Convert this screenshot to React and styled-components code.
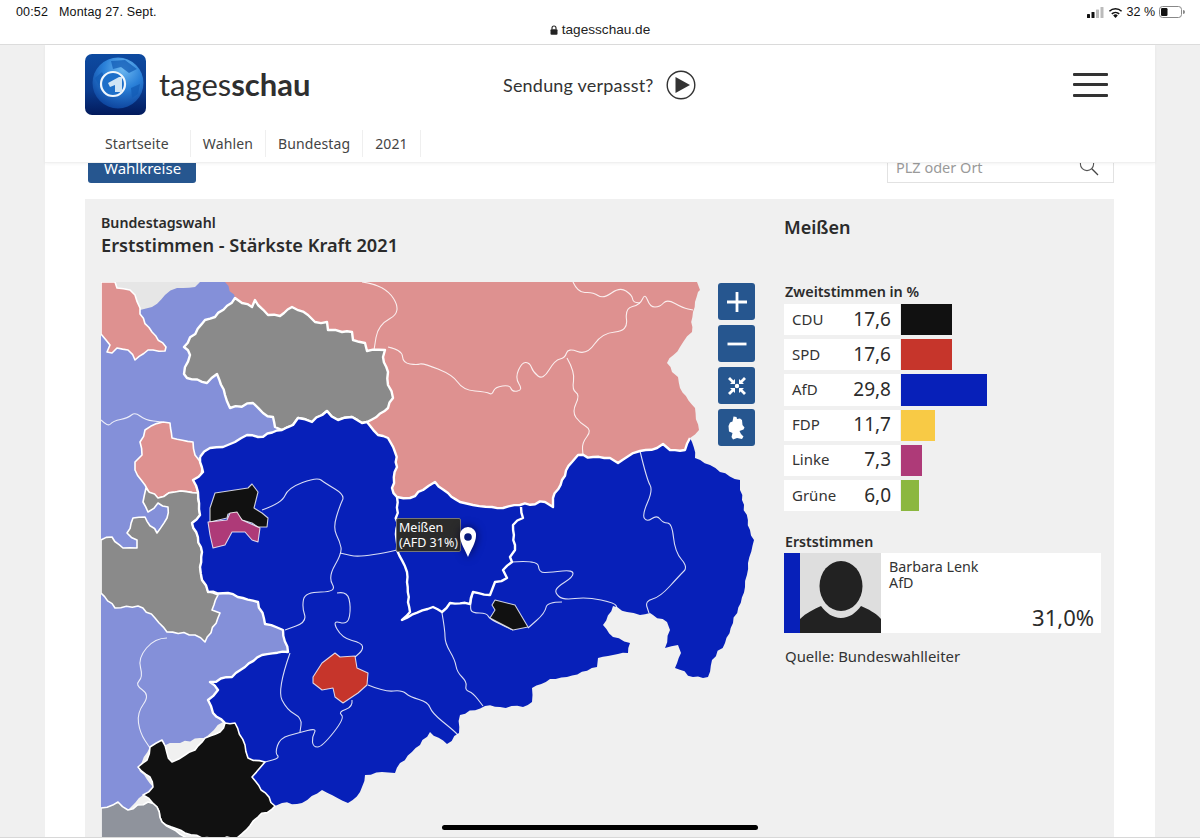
import React from "react";
import styled, { createGlobalStyle } from "styled-components";

const GlobalStyle = createGlobalStyle`
  html, body {
    margin: 0;
    padding: 0;
    background: #f0f0f0;
    overflow: hidden;
  }
  * { box-sizing: border-box; }
`;

//Data
const navItems = ["Startseite", "Wahlen", "Bundestag", "2021"];

const results = [
  { party: "CDU", value: "17,6", width: 51, color: "#111111" },
  { party: "SPD", value: "17,6", width: 51, color: "#c6352b" },
  { party: "AfD", value: "29,8", width: 86, color: "#0720b9" },
  { party: "FDP", value: "11,7", width: 34, color: "#f8ca45" },
  { party: "Linke", value: "7,3", width: 21, color: "#ae3a78" },
  { party: "Grüne", value: "6,0", width: 18, color: "#8bb73f" },
];

//Map shapes, in screen coordinates
const BLUE = "#0720b9";
const PINK = "#de9190";
const GRAY = "#8a8a8a";
const LIGHT = "#8490d9";
const BLACK = "#111111";

const regions = [
  {
    fill: LIGHT,
    width: 0,
    points:
      "101,282 228,282 240,300 300,420 288,652 262,655 232,677 210,682 218,690 208,700 213,713 223,722 205,738 150,747 138,767 153,787 143,795 128,810 118,802 101,808",
  },
  {
    fill: "#e6e6e6",
    width: 0,
    points: "115,282 200,282 195,287 177,288 165,295 152,307 140,310 135,295 130,290 117,288",
  },
  {
    fill: PINK,
    width: 1.6,
    points:
      "101,282 115,282 117,288 130,290 135,295 140,308 140,314 152,332 166,347 165,351 153,350 148,350 135,360 128,350 117,348 112,353 107,352 110,345 101,334",
  },
  {
    fill: PINK,
    width: 0,
    points:
      "225,282 697,282 700,290 698,292 693,312 692,332 680,347 667,363 672,372 678,377 680,388 695,408 699,430 690,438 685,450 670,450 663,444 657,448 640,451 627,457 618,463 610,458 593,457 578,455 572,462 562,480 553,498 553,507 545,502 520,505 503,508 492,507 473,505 460,502 448,493 435,482 423,490 410,498 397,497 392,488 397,467 395,452 388,438 378,435 367,422 360,418 300,400",
  },
  {
    fill: GRAY,
    width: 2.4,
    points:
      "235,298 242,303 252,307 255,300 258,305 268,315 280,316 292,307 308,315 315,322 327,322 328,330 342,332 352,332 353,340 365,343 367,351 385,350 383,357 388,372 388,385 393,398 388,408 367,422 362,423 352,417 338,420 327,411 312,422 298,418 293,425 282,430 275,427 273,417 263,413 253,403 230,408 225,395 217,374 207,383 187,378 184,374 190,355 184,347 205,320 215,317",
  },
  {
    fill: PINK,
    width: 1.6,
    points:
      "163,422 170,423 172,438 193,442 195,455 202,467 200,478 195,480 198,493 175,492 158,498 150,495 145,485 135,470 135,462 142,455 140,442 145,430",
  },
  {
    fill: GRAY,
    width: 1.6,
    points:
      "146,488 143,502 148,512 158,503 168,507 167,518 157,533 145,517 133,518 127,533 137,540 137,548 123,548 112,537 101,540 101,593 115,608 138,606 155,618 167,632 195,635 205,642 220,613 212,610 218,595 208,592 202,580 200,567 202,552 192,523 200,515 198,493 175,492 158,498",
  },
  {
    fill: BLUE,
    width: 0,
    points:
      "200,457 210,448 223,447 235,442 247,435 258,437 282,430 293,425 298,418 312,422 327,411 338,420 352,417 362,423 367,422 378,435 388,438 395,452 397,467 392,488 397,497 410,498 423,490 435,482 448,493 460,502 473,505 492,507 503,508 520,505 545,502 553,507 553,498 562,480 572,462 578,455 593,457 610,458 618,463 627,457 640,451 657,448 663,444 670,450 685,450 690,438 692,442 695,458 710,465 720,472 740,480 742,500 750,530 754,540 748,563 745,587 733,623 725,643 712,660 708,677 693,677 675,668 681,653 678,645 665,648 670,630 667,622 653,615 650,613 640,615 627,612 613,606 603,625 613,637 630,643 628,653 613,655 598,658 597,667 567,677 550,679 532,688 532,702 523,707 500,707 485,706 460,715 459,733 447,744 430,732 420,745 400,763 395,773 382,772 365,775 360,792 348,803 322,790 302,803 282,803 275,806 252,777 265,762 248,758 245,745 235,723 225,723 213,713 208,700 218,690 210,682 232,677 245,667 262,655 288,652 283,630 265,624 258,602 228,593 208,592 202,580 200,567 202,552 192,523 200,515 198,492 193,480 203,472",
  },
  {
    fill: BLACK,
    width: 1.6,
    points:
      "225,723 235,723 245,745 248,758 265,762 252,777 275,806 258,817 237,838 202,838 185,833 162,822 157,807 143,795 153,787 150,777 138,767 147,760 150,747 162,740 167,753 172,762 185,755 195,750 205,738 220,732",
  },
  {
    fill: "#8f939c",
    width: 1.6,
    points: "101,808 118,802 128,810 148,802 157,807 162,822 185,837 190,840 101,840",
  },
];

const spots = [
  {
    fill: BLACK,
    points:
      "215,493 248,488 252,484 258,492 254,508 262,513 268,518 267,527 258,527 252,523 242,520 235,513 228,514 227,518 210,522 210,508",
  },
  {
    fill: "#ae3a78",
    points:
      "208,522 227,520 230,513 237,512 242,520 260,528 258,542 252,540 245,532 232,532 225,545 213,548 210,535",
  },
  {
    fill: "#c6352b",
    points:
      "322,663 335,653 340,657 355,656 357,668 368,673 367,685 358,693 343,703 335,697 333,688 322,690 313,683 313,677",
  },
  { fill: BLACK, points: "495,600 515,605 528,627 513,630 490,618 495,610 492,605" },
];

const thinLines = [
  "101,420 108,427 113,421 128,418 135,412 145,420 162,422",
  "167,638 155,638 138,658 143,677 135,685 150,695 137,713 140,733 150,748",
  "362,282 385,285 402,312 378,325 374,350",
  "388,347 402,350 403,363 417,365 423,363 453,375 463,390 487,392 492,395 495,387 510,385 512,392 523,390 515,378 522,362 530,363 533,372 543,380 555,360 565,358 568,348 587,355 602,333 628,331 625,308 640,305 645,293 650,307 660,307 667,299 683,308 693,310",
  "573,282 578,293 593,292 603,299 620,287 632,295 633,302 640,303",
  "567,358 575,372 572,390 580,395 572,412 580,423 592,430 582,443 583,455",
  "262,510 282,503 288,488 317,477 325,483 345,495 340,505 333,528 340,542 342,553 328,577 337,592 305,592 302,607 307,622 285,630",
  "337,593 347,591 351,607 348,625 332,620 342,638 362,643 363,650 355,657",
  "397,550 362,558 340,553",
  "368,685 385,692 402,690 410,697 428,702 432,713 453,730 458,735",
  "352,700 353,707 338,712 345,718 322,747 313,747 312,737 317,728 298,733 280,738 275,753 280,758 265,762",
  "290,653 277,690 287,710 302,718 300,732",
  "512,562 538,560 539,573 552,572 573,570 573,577 557,587 555,593 563,600 587,597 615,603 617,608",
  "562,602 547,602 545,613 528,628",
  "513,630 490,620 487,613 472,613 470,607 473,593",
  "442,613 445,630 445,643 455,660 457,672 467,682 465,690 473,693 483,706",
  "640,451 647,480 653,490 642,515 647,522 657,515 663,523 672,523 675,552 688,567 680,575 660,597 645,601 649,613",
];

const thickLines = [
  "200,457 210,448 223,447 235,442 247,435 258,437 282,430 293,425 298,418 312,422 327,411 338,420 352,417 362,423 367,422 378,435 388,438 395,452 397,467 392,488 397,497 410,498 423,490 435,482 448,493 460,502 473,505 492,507 503,508 520,505 545,502 553,507 553,498 562,480 572,462 578,455 593,457 610,458 618,463 627,457 640,451 657,448 663,444 670,450 685,450 690,438",
  "225,723 213,713 208,700 218,690 210,682 232,677 245,667 262,655 288,652 283,630 265,624 258,602 228,593 208,592 202,580 200,567 202,552 192,523 200,515 198,492 193,480 203,472 200,457",
  "397,497 397,550 407,572 410,612 402,620 433,607 442,612 450,603 470,604 473,592 490,595 495,582 507,578 503,570 512,562 510,557 515,550 513,525 523,518 521,507",
];

//Map helpers
const parsePoints = (points) => points.split(" ").map((p) => p.split(",").map(Number));

const wobble = (x, y) => {
  const n = Math.sin(x * 12.9898 + y * 78.233) * 43758.5453;
  return (n - Math.floor(n) - 0.5) * 2.6;
};

//Breaks an edge into short steps so the borders look jagged. Shared edges get the same steps.
const edgeSteps = (a, b) => {
  const flip = a[0] > b[0] || (a[0] === b[0] && a[1] > b[1]);
  const [s, e] = flip ? [b, a] : [a, b];
  const onFrame = (s[0] === 101 && e[0] === 101) || (s[1] === 282 && e[1] === 282);
  const dx = e[0] - s[0];
  const dy = e[1] - s[1];
  const len = Math.hypot(dx, dy);
  const steps = Math.floor(len / 5);
  const mids = [];
  for (let k = 1; k < steps; k++) {
    const x = s[0] + (dx * k) / steps;
    const y = s[1] + (dy * k) / steps;
    const w = onFrame ? 0 : wobble(Math.round(x), Math.round(y));
    mids.push([x - (dy / len) * w, y + (dx / len) * w]);
  }
  return flip ? mids.reverse() : mids;
};

const toPointString = (list) => list.map((p) => p.map((v) => v.toFixed(1)).join(",")).join(" ");

const roughenLine = (points) => {
  const list = parsePoints(points);
  const out = [];
  list.forEach((a, i) => {
    out.push(a);
    if (list[i + 1]) out.push(...edgeSteps(a, list[i + 1]));
  });
  return toPointString(out);
};

const roughen = (points) => {
  const first = points.split(" ")[0];
  return roughenLine(`${points} ${first}`);
};

//Rounded corners for the thin district lines
const smoothPath = (points) => {
  const list = parsePoints(points);
  let d = `M${list[0][0]} ${list[0][1]}`;
  for (let i = 1; i < list.length - 1; i++) {
    const mx = (list[i][0] + list[i + 1][0]) / 2;
    const my = (list[i][1] + list[i + 1][1]) / 2;
    d += ` Q${list[i][0]} ${list[i][1]} ${mx} ${my}`;
  }
  const end = list[list.length - 1];
  return `${d} L${end[0]} ${end[1]}`;
};

//Small drawings
const Logo = () => (
  <svg width="61" height="61" viewBox="0 0 61 61">
    <defs>
      <linearGradient id="logoBg" x1="0" y1="0" x2="0" y2="1">
        <stop offset="0" stopColor="#0d4aa0" />
        <stop offset="0.6" stopColor="#0a3a8c" />
        <stop offset="1" stopColor="#021a5c" />
      </linearGradient>
      <radialGradient id="logoGlobe" cx="0.6" cy="0.22" r="0.85">
        <stop offset="0" stopColor="#6db8f0" />
        <stop offset="0.45" stopColor="#2a80d8" />
        <stop offset="1" stopColor="#0a3d96" />
      </radialGradient>
    </defs>
    <rect width="61" height="61" rx="7" fill="url(#logoBg)" />
    <circle cx="33" cy="29" r="25.5" fill="url(#logoGlobe)" />
    <path d="M26 7 L40 6 L52 15 L44 19 L36 13 L28 15 Z M10 24 L17 18 L20 24 L14 32 Z M46 34 L55 30 L53 40 L47 44 Z" fill="#135cb5" opacity="0.75" />
    <circle cx="28" cy="30" r="12" fill="#1d6fc9" stroke="#f0f7fd" strokeWidth="2.2" />
    <path d="M23 29 L34 23 L37 23 L37 38 L30 38 L30 31 L25 33 Z" fill="#cfe4f5" />
  </svg>
);

const PlayIcon = () => (
  <svg width="30" height="30" viewBox="0 0 30 30">
    <circle cx="15" cy="15" r="13.8" fill="none" stroke="#333" strokeWidth="1.4" />
    <path d="M9.5 7 L24 15 L9.5 23 Z" fill="#333" />
  </svg>
);

const SearchIcon = () => (
  <svg width="22" height="22" viewBox="0 0 22 22">
    <circle cx="9" cy="8" r="6.6" fill="none" stroke="#555" strokeWidth="1.1" />
    <path d="M13.8 12.8 L20 19" stroke="#444" strokeWidth="1.3" fill="none" />
  </svg>
);

const SignalIcon = () => (
  <svg width="17" height="11" viewBox="0 0 17 11">
    <rect x="0" y="7" width="3" height="4" rx="0.6" fill="#111" />
    <rect x="4.5" y="5" width="3" height="6" rx="0.6" fill="#111" />
    <rect x="9" y="2.5" width="3" height="8.5" rx="0.6" fill="#bbb" />
    <rect x="13.5" y="0" width="3" height="11" rx="0.6" fill="#bbb" />
  </svg>
);

const WifiIcon = () => (
  <svg width="15" height="11" viewBox="0 0 15 11">
    <path d="M7.5 11 L5.2 8.4 A3.4 3.4 0 0 1 9.8 8.4 Z" fill="#111" />
    <path d="M3.8 6.9 A5.4 5.4 0 0 1 11.2 6.9" fill="none" stroke="#111" strokeWidth="1.5" />
    <path d="M1.4 4.3 A8.8 8.8 0 0 1 13.6 4.3" fill="none" stroke="#111" strokeWidth="1.5" />
  </svg>
);

const BatteryIcon = () => (
  <svg width="26" height="12" viewBox="0 0 26 12">
    <rect x="0.5" y="0.5" width="22" height="11" rx="3" fill="none" stroke="#888" />
    <rect x="2" y="2" width="6.5" height="8" rx="1.2" fill="#111" />
    <path d="M24 4 A2 2 0 0 1 24 8 Z" fill="#888" />
  </svg>
);

const LockIcon = () => (
  <svg width="8" height="10" viewBox="0 0 8 10">
    <path d="M2 4.5 V3 A2 2 0 0 1 6 3 V4.5" fill="none" stroke="#222" strokeWidth="1.1" />
    <rect x="0.5" y="4.2" width="7" height="5.5" rx="1" fill="#222" />
  </svg>
);

const PlusIcon = () => (
  <svg width="26" height="26" viewBox="0 0 26 26">
    <path d="M13 3 V23 M3 13 H23" stroke="#fff" strokeWidth="2.8" />
  </svg>
);

const MinusIcon = () => (
  <svg width="26" height="26" viewBox="0 0 26 26">
    <path d="M3.5 13 H22.5" stroke="#fff" strokeWidth="2.8" />
  </svg>
);

const FitIcon = () => (
  <svg width="20" height="20" viewBox="0 0 20 20" fill="#fff">
    <circle cx="10" cy="10" r="2.2" />
    <path d="M1 3 L3 1 L6.4 4.4 L8 3 V8 H3 L4.6 6.4 Z" />
    <path d="M19 3 L17 1 L13.6 4.4 L12 3 V8 H17 L15.4 6.4 Z" />
    <path d="M1 17 L3 19 L6.4 15.6 L8 17 V12 H3 L4.6 13.6 Z" />
    <path d="M19 17 L17 19 L13.6 15.6 L12 17 V12 H17 L15.4 13.6 Z" />
  </svg>
);

const GermanyIcon = () => (
  <svg width="18" height="24" viewBox="0 0 18 24">
    <path
      d="M5.5 0.5 L8.5 1 L9 3 L12 2.5 L14 4 L14.5 9 L16.5 11.5 L15.5 13.5 L11.5 15 L13 18 L15.5 20.5 L14 23 L9 22 L5 23.5 L3.5 21 L4.5 17 L1 15.5 L0.5 10 L2 6.5 L4.5 5.5 Z"
      fill="#fff"
    />
  </svg>
);

const Silhouette = () => (
  <svg width="81" height="80" viewBox="0 0 81 80">
    <rect width="81" height="80" fill="#dedede" />
    <path
      d="M0 66 C6 60 14 56 21 53 C26 60 33 65 41 65 C49 65 56 60 61 53 C68 56 76 60 81 66 V80 H0 Z"
      fill="#222"
    />
    <ellipse cx="41" cy="33" rx="21.5" ry="25" fill="#222" />
  </svg>
);

const MapPin = () => (
  <svg width="16" height="30" viewBox="0 0 16 30">
    <path d="M8 0 A8 8 0 0 1 16 9 C16 15 11 23 8 30 C5 23 0 15 0 9 A8 8 0 0 1 8 0 Z" fill="#fff" />
    <circle cx="8" cy="10" r="3.8" fill="#071a7a" />
  </svg>
);

const App = () => {
  return (
    <>
      <GlobalStyle />
      <Screen>
        <TopBar>
          <StatusRow>
            <StatusText>
              00:52<DateText>Montag 27. Sept.</DateText>
            </StatusText>
            <StatusIcons>
              <SignalIcon />
              <WifiIcon />
              <span>32 %</span>
              <BatteryIcon />
            </StatusIcons>
          </StatusRow>
          <UrlRow>
            <LockIcon />
            tagesschau.de
          </UrlRow>
        </TopBar>
        <Gutter>
          <Site>
            <Header>
              <Brand>
                <Logo />
                <Wordmark>
                  tages<b>schau</b>
                </Wordmark>
                <Missed>
                  Sendung verpasst?
                  <PlayIcon />
                </Missed>
                <Burger>
                  <span />
                  <span />
                  <span />
                </Burger>
              </Brand>
              <Nav>
                {navItems.map((item) => (
                  <NavItem key={item}>{item}</NavItem>
                ))}
              </Nav>
            </Header>
            <FilterRow>
              <FilterButton>Wahlkreise</FilterButton>
              <SearchBox>
                PLZ oder Ort
                <SearchIcon />
              </SearchBox>
            </FilterRow>
            <Panel>
              <MapColumn>
                <Kicker>Bundestagswahl</Kicker>
                <Title>Erststimmen - Stärkste Kraft 2021</Title>
                <MapArea>
                  <svg width="667" height="556" viewBox="101 282 667 556">
                    {regions.map((region, i) => (
                      <polygon
                        key={i}
                        points={roughen(region.points)}
                        fill={region.fill}
                        stroke={region.width ? "#fff" : "none"}
                        strokeWidth={region.width}
                        strokeLinejoin="round"
                      />
                    ))}
                    {thinLines.map((line, i) => (
                      <path key={i} d={smoothPath(line)} fill="none" stroke="#fff" strokeOpacity="0.85" strokeWidth="1.1" />
                    ))}
                    {thickLines.map((line, i) => (
                      <polyline key={i} points={roughenLine(line)} fill="none" stroke="#fff" strokeWidth="2.4" strokeLinejoin="round" />
                    ))}
                    {spots.map((spot, i) => (
                      <polygon key={i} points={spot.points} fill={spot.fill} stroke="#fff" strokeOpacity="0.8" strokeWidth="1.1" strokeLinejoin="round" />
                    ))}
                  </svg>
                  <MapControls>
                    <MapButton><PlusIcon /></MapButton>
                    <MapButton><MinusIcon /></MapButton>
                    <MapButton><FitIcon /></MapButton>
                    <MapButton><GermanyIcon /></MapButton>
                  </MapControls>
                  <Tooltip>
                    Meißen
                    <br />
                    (AFD 31%)
                  </Tooltip>
                  <PinSpot>
                    <MapPin />
                  </PinSpot>
                </MapArea>
              </MapColumn>
              <Sidebar>
                <PlaceName>Meißen</PlaceName>
                <SectionLabel>Zweitstimmen in %</SectionLabel>
                <Results>
                  {results.map((row) => (
                    <ResultRow key={row.party}>
                      <RowInfo>
                        <Party>{row.party}</Party>
                        <Value>{row.value}</Value>
                      </RowInfo>
                      <Bar $color={row.color} style={{ width: row.width }} />
                    </ResultRow>
                  ))}
                </Results>
                <CandidateLabel>Erststimmen</CandidateLabel>
                <Candidate>
                  <PartyStrip />
                  <Silhouette />
                  <CandidateInfo>
                    <CandidateName>
                      Barbara Lenk
                      <br />
                      AfD
                    </CandidateName>
                    <Percent>31,0%</Percent>
                  </CandidateInfo>
                </Candidate>
                <Source>Quelle: Bundeswahlleiter</Source>
              </Sidebar>
            </Panel>
          </Site>
        </Gutter>
        <HomeIndicator />
      </Screen>
    </>
  );
};

const SANS = `"Noto Sans", "Open Sans", sans-serif`;

const Screen = styled.div`
  position: relative;
  width: 1200px;
  height: 838px;
  overflow: hidden;
  display: flex;
  flex-direction: column;
  font-family: ${SANS};
  color: #2b2b2b;
  background: #f0f0f0;
  border-bottom: 1px solid #d8d8d8;
`;

const TopBar = styled.div`
  height: 45px;
  flex: none;
  background: #fff;
  border-bottom: 1px solid #dcdcdc;
  font-family: "Liberation Sans", sans-serif;
  color: #111;
`;

const StatusRow = styled.div`
  height: 22px;
  padding: 2px 15px 0 16px;
  display: flex;
  justify-content: space-between;
  align-items: center;
  font-size: 12.5px;
`;

const StatusText = styled.div`
  letter-spacing: 0.15px;
`;

const DateText = styled.span`
  margin-left: 11px;
`;

const StatusIcons = styled.div`
  display: flex;
  align-items: center;
  gap: 4px;
  font-size: 12.5px;
`;

const UrlRow = styled.div`
  display: flex;
  justify-content: center;
  align-items: center;
  gap: 4px;
  font-size: 13.6px;
  color: #222;
`;

const Gutter = styled.div`
  flex: 1;
  padding: 0 45px;
  min-height: 0;
`;

const Site = styled.div`
  background: #fff;
  height: 100%;
`;

const Header = styled.div`
  height: 118px;
  padding: 9px 40px 0;
  border-bottom: 1px solid #f0f0f0;
  box-shadow: 0 1px 3px rgba(0, 0, 0, 0.05);
  position: relative;
  z-index: 2;
  background: #fff;
`;

const Brand = styled.div`
  display: flex;
  align-items: center;
  height: 61px;
`;

const Wordmark = styled.div`
  margin-left: 13px;
  font-family: Lato, sans-serif;
  font-size: 31px;
  color: #2f2f2f;
  width: 344px;
  margin-top: -2px;
  b {
    font-weight: 700;
  }
`;

const Missed = styled.div`
  display: flex;
  align-items: center;
  gap: 12px;
  font-family: Lato, sans-serif;
  font-size: 18px;
  letter-spacing: 0.2px;
  color: #333;
`;

const Burger = styled.div`
  margin-left: auto;
  margin-right: 7px;
  width: 35px;
  display: flex;
  flex-direction: column;
  gap: 7.5px;
  span {
    display: block;
    height: 3px;
    background: #333;
    border-radius: 1px;
  }
`;

const Nav = styled.div`
  display: flex;
  margin-top: 15px;
  padding-left: 0;
`;

const NavItem = styled.div`
  height: 27px;
  padding: 0 12px;
  line-height: 27px;
  font-size: 14px;
  letter-spacing: 0.12px;
  color: #444;
  border-right: 1px solid #efefef;
  &:first-child {
    padding-left: 20px;
    padding-right: 21px;
  }
`;

const FilterRow = styled.div`
  height: 20px;
  padding: 0 41px 0 43px;
  display: flex;
  justify-content: space-between;
  align-items: flex-end;
  overflow: hidden;
`;

const FilterButton = styled.div`
  width: 108px;
  height: 28px;
  padding-left: 16px;
  line-height: 26px;
  font-size: 15px;
  color: #fff;
  background: #26568f;
  border-radius: 3px;
`;

const SearchBox = styled.div`
  width: 227px;
  height: 32px;
  padding: 0 13px 0 8px;
  display: flex;
  justify-content: space-between;
  align-items: center;
  font-size: 14.5px;
  color: #9a9a9a;
  border: 1px solid #e2e2e2;
`;

const Panel = styled.div`
  margin: 16px 41px 0 40px;
  height: 700px;
  padding-left: 16px;
  background: #f0f0f0;
  display: grid;
  grid-template-columns: 683px 1fr;
`;

const MapColumn = styled.div`
  min-width: 0;
`;

const Kicker = styled.div`
  margin-top: 15px;
  font-size: 14.2px;
  line-height: 18px;
  font-weight: 600;
`;

const Title = styled.div`
  font-size: 18.2px;
  line-height: 27px;
  font-weight: 600;
`;

const MapArea = styled.div`
  position: relative;
  margin-top: 23px;
  line-height: 0;
  svg {
    display: block;
  }
`;

const MapControls = styled.div`
  position: absolute;
  top: 1px;
  left: 617px;
  display: flex;
  flex-direction: column;
  gap: 5px;
`;

const MapButton = styled.div`
  width: 37px;
  height: 37px;
  display: flex;
  align-items: center;
  justify-content: center;
  background: #26568f;
  border-radius: 3px;
`;

const Tooltip = styled.div`
  position: absolute;
  left: 295px;
  top: 236px;
  width: 65px;
  height: 34px;
  padding: 1px 0 0 2px;
  font-size: 12.5px;
  line-height: 15px;
  color: #fff;
  background: #2b2b2b;
  border: 1px solid #777;
  border-radius: 2px;
  white-space: nowrap;
`;

const PinSpot = styled.div`
  position: absolute;
  left: 359px;
  top: 245px;
  filter: drop-shadow(0 0 5px rgba(0, 0, 40, 0.8));
`;

const Sidebar = styled.div`
  padding-right: 13px;
`;

const PlaceName = styled.div`
  margin-top: 15px;
  font-size: 18px;
  line-height: 26px;
  font-weight: 600;
`;

const SectionLabel = styled.div`
  margin-top: 42px;
  margin-left: 1px;
  font-size: 14.4px;
  line-height: 20px;
  font-weight: 600;
`;

const Results = styled.div`
  display: flex;
  flex-direction: column;
  gap: 4px;
  margin-top: 2px;
`;

const ResultRow = styled.div`
  display: flex;
  height: 31.2px;
`;

const RowInfo = styled.div`
  width: 116px;
  margin-right: 1px;
  padding: 0 9px 2px 8px;
  background: #fff;
  display: flex;
  justify-content: space-between;
  align-items: center;
`;

const Party = styled.span`
  font-size: 15px;
  color: #333;
`;

const Value = styled.span`
  font-size: 19px;
  color: #2b2b2b;
`;

const Bar = styled.div`
  background: ${(props) => props.$color};
`;

const CandidateLabel = styled.div`
  margin-top: 21px;
  margin-left: 1px;
  font-size: 14.2px;
  line-height: 20px;
  font-weight: 600;
`;

const Candidate = styled.div`
  display: flex;
  height: 80px;
  margin-top: 1px;
  background: #fff;
  svg {
    display: block;
  }
`;

const PartyStrip = styled.div`
  width: 16px;
  background: #0720b9;
`;

const CandidateInfo = styled.div`
  flex: 1;
  padding: 6px 7px 1px 8px;
  display: flex;
  flex-direction: column;
  justify-content: space-between;
`;

const CandidateName = styled.div`
  font-size: 14.3px;
  line-height: 16px;
  color: #333;
`;

const Percent = styled.div`
  text-align: right;
  font-size: 22px;
  line-height: 30px;
  color: #2b2b2b;
`;

const Source = styled.div`
  margin-top: 13px;
  margin-left: 1px;
  font-size: 14.9px;
  line-height: 20px;
  color: #333;
`;

const HomeIndicator = styled.div`
  position: absolute;
  left: 442px;
  top: 825px;
  width: 316px;
  height: 5px;
  background: #000;
  border-radius: 3px;
`;

export default App;
